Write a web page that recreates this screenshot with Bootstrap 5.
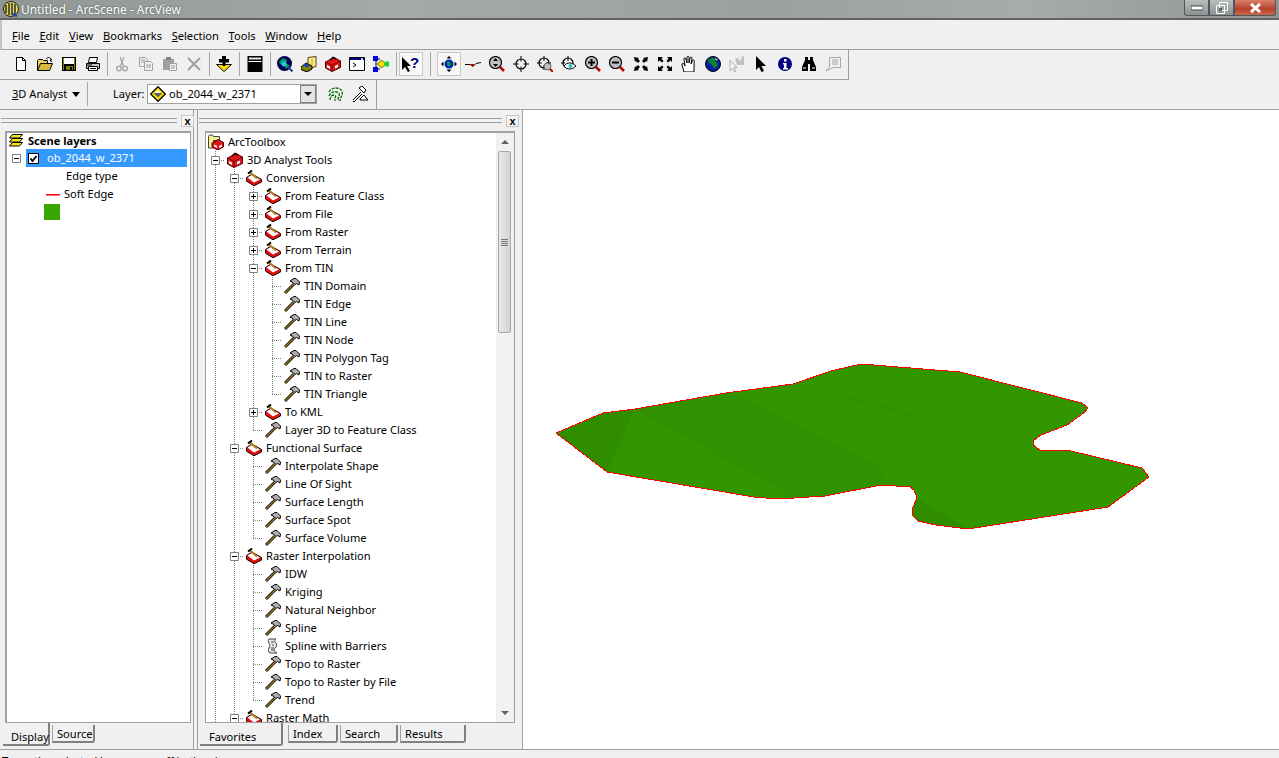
<!DOCTYPE html>
<html lang="en">
<head>
  <meta charset="UTF-8" />
  <meta name="viewport" content="width=device-width, initial-scale=1.0" />
  <title>Untitled - ArcScene - ArcView</title>
  <link href="https://cdn.jsdelivr.net/npm/bootstrap@5.3.3/dist/css/bootstrap.min.css" rel="stylesheet">
  <style>
    html, body { height: 100%; }
    body { width: 1279px; height: 758px; overflow: hidden; background: #f0f0f0; color: #000; font: 11.1px/18px "Noto Sans", "Liberation Sans", sans-serif; }
    .ico { width: 16px; height: 16px; flex: none; display: block; }
    .titlebar { height: 20px; background: linear-gradient(90deg, #8f9694, #a4aaa8 30%, #9ba1a0 60%, #a6acaa 80%, #8f9694); border-bottom: 2px solid #5f6362; padding-left: 3px; color: #fff; font-size: 11.9px; text-shadow: 0 0 2px #555; }
    .titlebar span { margin-left: 2px; }
    .winbtns { margin-right: 3px; align-self: flex-start; }
    .winbtn { width: 25px; height: 16px; border: 1px solid #50565a; border-top: 0; background: linear-gradient(#b9bdbd, #8d9292); display: flex; align-items: center; justify-content: center; }
    .winbtn-first { border-radius: 0 0 0 3px; }
    .winbtn-close { width: 42px; background: linear-gradient(#d8806c, #b8402c 60%, #c96a50); border-radius: 0 0 3px 0; }
    .menubar { height: 30px; border-bottom: 1px solid #a0a0a0; padding: 2px 0 0 10px; gap: 9.7px; border-left: 2px solid #c4c4c4; }
    .menubar .nav-link { padding: 0; color: #000; font-size: 11.1px; }
    .tb-band { height: 30px; }
    .tb-last { border-bottom: 1px solid #a0a0a0; }
    .tb-bar { height: 30px; border-right: 1px solid #a0a0a0; border-bottom: 1px solid #a0a0a0; }
    .tb-std { width: 849px; padding-left: 9px; padding-bottom: 2px; }
    .tb-3d { width: 377px; border-bottom: 0; padding-left: 12px; padding-bottom: 2px; }
    .tbtn { width: 24px; height: 24px; padding: 0; border: 0; border-radius: 0; display: flex; align-items: center; justify-content: center; flex: none; }
    .tbtn-on { background: #f8f8f8; box-shadow: inset 0 0 0 1px #c8c8c8; }
    .tsep { flex: none; display: flex; justify-content: center; }
    .tsep::before { content: ""; width: 1px; height: 24px; background: #a8a8a8; }
    .s5 { width: 5px; } .s6 { width: 6px; } .s7 { width: 7px; } .s14 { width: 14px; }
    .an-btn { width: 73px; white-space: nowrap; }
    .an-arrow { width: 0; height: 0; border: 4px solid transparent; border-top: 5px solid #000; border-bottom: 0; margin-left: 5px; }
    .layer-lbl { margin-left: 23px; width: 34px; }
    .combo { width: 170px; height: 20px; background: #fff; border: 1px solid #a0a0a0; padding-left: 2px; }
    .combo span { flex: 1; margin-left: 3px; }
    .combo-btn { width: 16px; height: 18px; background: #e4e4e4; border: 1px solid #808080; display: flex; align-items: center; justify-content: center; }
    .combo-btn::before { content: ""; border: 4px solid transparent; border-top: 4px solid #000; border-bottom: 0; }
    .tb-tools { margin-left: 7px; }
    .mainrow { height: 639px; }
    .dock { display: flex; flex-direction: column; }
    .dock-l { width: 194px; padding-left: 5px; border-right: 1px solid #a0a0a0; }
    .dock-r { width: 326px; margin-left: 3px; border-left: 1px solid #a0a0a0; border-right: 1px solid #a0a0a0; padding-left: 7px; padding-right: 3px; }
    .dock-head { height: 21px; gap: 4px; flex: none; }
    .grip { flex: 1; height: 5px; border-top: 1px solid #a0a0a0; border-bottom: 1px solid #a0a0a0; border-left: 0; }
    .closer { width: 13px; height: 12px; background: #f4f4f4; border: 1px solid #c8c8c8; font: bold 11px/10px "Liberation Sans", sans-serif; text-align: center; flex: none; }
    .dock-l .grip { margin-left: -4px; }
    .dock-l .closer { margin-right: -1px; }
    .dock-r .grip { margin-left: -6px; }
    .sunken { height: 592px; background: #fff; border: 1px solid #a0a0a0; border-top-width: 2px; border-left-width: 2px; overflow: hidden; flex: none; }
    .dock-l .sunken { width: 186px; padding: 0 3px 0 0; }
    .dock-r .sunken { width: 310px; border-left-width: 1px; }
    .sc-head { height: 16px; padding-left: 1px; font-weight: 700; }
    .sc-head span { margin-left: 4px; }
    .sc-row { height: 18px; }
    .exp-slot { width: 19px; flex: none; display: flex; align-items: center; justify-content: center; }
    .sc-sel { flex: 1; height: 18px; background: #3399ff; color: #fff; padding-left: 2px; }
    .sc-check { width: 11px; height: 11px; margin-right: 8px; }
    .indent-a { padding-left: 59px; } .indent-b { padding-left: 39px; }
    .soft-line { width: 14px; height: 3px; margin-right: 4px; margin-top: 3px; flex: none; display: block; }
    .swatch { width: 16px; height: 16px; background: #38a600; margin: 1px 0 0 37px; }
    .tree-wrap { flex: 1; min-width: 0; overflow: hidden; }
    .t-row { height: 18px; white-space: nowrap; }
    .t-label { margin-left: 4px; }
    .t-ic { margin-left: 2px; }
    .cell { width: 19px; height: 18px; flex: none; display: flex; align-items: center; justify-content: center; background-repeat: no-repeat; }
    .c-v { background-image: repeating-linear-gradient(#808080 0 1px, transparent 1px 2px); background-size: 1px 100%; background-position: 9px 0; }
    .c-tee { background-image: repeating-linear-gradient(#808080 0 1px, transparent 1px 2px), repeating-linear-gradient(90deg, #808080 0 1px, transparent 1px 2px); background-size: 1px 100%, 10px 1px; background-position: 9px 0, 9px 9px; }
    .c-ell { background-image: repeating-linear-gradient(#808080 0 1px, transparent 1px 2px), repeating-linear-gradient(90deg, #808080 0 1px, transparent 1px 2px); background-size: 1px 10px, 10px 1px; background-position: 9px 0, 9px 9px; }
    .exp { width: 9px; height: 9px; display: block; }
    .vscroll { width: 18px; flex: none; background: #f2f2f2; border-left: 1px solid #eee; border-right: 2px solid #f0f0f0; }
    .sb-end { height: 18px; display: flex; align-items: center; justify-content: center; flex: none; }
    .sb-up::before { content: ""; border: 4px solid transparent; border-bottom: 4px solid #606060; border-top: 0; }
    .sb-dn::before { content: ""; border: 4px solid transparent; border-top: 4px solid #606060; border-bottom: 0; }
    .sb-thumb { height: 182px; margin: 0 1px; background: linear-gradient(90deg, #e8e8e8, #d4d4d4); border: 1px solid #a8a8a8; border-radius: 2px; display: flex; align-items: center; justify-content: center; flex: none; }
    .sb-thumb::before { content: ""; width: 7px; height: 7px; background: repeating-linear-gradient(#777 0 1px, transparent 1px 2px); }
    .sb-rest { flex: 1; }
    .tabstrip { height: 25px; flex: none; flex-wrap: nowrap; }
    .tabstrip .nav-link { padding: 0 0 0 4px; height: 18px; color: #000; background: #f0f0f0; border: 1px solid #a0a0a0; border-top: 0; border-right: 2px solid #808080; border-bottom: 2px solid #808080; border-radius: 0 0 3px 0; font: 11.1px/17px "Noto Sans", "Liberation Sans", sans-serif; margin: 2px 0 0 2px; white-space: nowrap; flex: none; }
    .tabstrip .tab-on { height: 23px; margin: 0 0 0 -2px; padding: 5px 0 0 8px; border-left: 0; }
    .dock-r .tabstrip .tab-on { margin-left: -5px; padding-left: 9px; margin-right: 3px; }
    .w-display { width: 47px; } .w-source { width: 43px; }
    .w-fav { width: 83px; } .w-index { width: 50px; } .w-search { width: 58px; } .w-results { width: 66px; }
    .scene-view { flex: 1; background: #fff; }
    .scene-svg { display: block; width: 756px; height: 639px; }
    .statusbar { height: 9px; border-top: 1px solid #a0a0a0; overflow: hidden; padding: 2px 0 0 2px; line-height: 18px; white-space: nowrap; }
  </style>
</head>
<body>
<svg width="0" height="0" class="d-none" aria-hidden="true"><defs>
  <symbol id="i-app" viewBox="0 0 16 16"><circle cx="8" cy="8" r="7.500" fill="#e8d850" stroke="#222"/><path d="M3 4v8M6 2v12M9 2v12M12 3v10" stroke="#223" stroke-width="1.400"/><path d="M9 13l5 2" stroke="#2040c0" stroke-width="2"/></symbol>
  <symbol id="i-new" viewBox="0 0 16 16"><path d="M3.500 1.500h6l3 3v10h-9z" fill="#fff" stroke="#000"/><path d="M9.500 1.500v3h3" fill="none" stroke="#000"/></symbol>
  <symbol id="i-open" viewBox="0 0 16 16"><path d="M.5 14.500v-10l1-1h4l1 1h4v3" fill="#e8d060" stroke="#000"/><path d="M.5 14.500l3-7h12l-3 7z" fill="#d8b840" stroke="#000"/><path d="M9 3c2-2 4-2 5 0l1 1h-2l1.500 2" fill="none" stroke="#000"/></symbol>
  <symbol id="i-save" viewBox="0 0 16 16"><path d="M1 1h14v14H1z" fill="#000"/><path d="M3 2h10v6H3z" fill="#fff"/><path d="M2 2h1v12H2zM13 2h1v12h-1zM5 10h7v4H5z" fill="#808000"/><path d="M9 11h2v3H9z" fill="#000"/></symbol>
  <symbol id="i-print" viewBox="0 0 16 16"><path d="M4.500 1.500h8l-1 5h-8z" fill="#fff" stroke="#000"/><path d="M1.500 7.500h13v5h-13z" fill="#c8c8c8" stroke="#000"/><path d="M3.500 10.500h9v4h-9z" fill="#fff" stroke="#000"/><path d="M2 9h5" stroke="#000"/><path d="M5 12.500h6" stroke="#000"/></symbol>
  <symbol id="i-cut" viewBox="0 0 16 16"><g fill="none" stroke="#a0a0a0" stroke-width="1.200"><path d="M6 1l3.500 9M10 1L6.500 10"/><circle cx="5" cy="12.500" r="2.300"/><circle cx="11" cy="12.500" r="2.300"/></g></symbol>
  <symbol id="i-copy" viewBox="0 0 16 16"><g fill="#f0f0f0" stroke="#a0a0a0"><path d="M1.500 1.500h6l2 2v7h-8z"/><path d="M6.500 5.500h6l2 2v7h-8z"/></g><path d="M3 4h4M3 6h3M8 9h5M8 11h5" stroke="#a0a0a0"/></symbol>
  <symbol id="i-paste" viewBox="0 0 16 16"><path d="M1 3h11v11H1z" fill="#a0a0a0"/><path d="M4 1h5v3H4z" fill="#808080"/><path d="M7.500 7.500h7v7h-7z" fill="#f0f0f0" stroke="#a0a0a0"/><path d="M9 10h4M9 12h4" stroke="#a0a0a0"/></symbol>
  <symbol id="i-del" viewBox="0 0 16 16"><path d="M2 2l12 12M14 2L2 14" stroke="#a0a0a0" stroke-width="2"/></symbol>
  <symbol id="i-add" viewBox="0 0 16 16"><path d="M.5 8.500h15L8 15.500z" fill="#ffe000" stroke="#000"/><path d="M6 0h4v3h3v3.500H3V3h3z" fill="#000"/><path d="M6.500 6h3v4h-3z" fill="#000"/></symbol>
  <symbol id="i-win" viewBox="0 0 16 16"><path d="M.5 0h15v16H.5z" fill="#000"/><path d="M2 1.500h12v2H2z" fill="#e8e8e8"/><path d="M1.500 5.500h13" stroke="#fff"/></symbol>
  <symbol id="i-gsearch" viewBox="0 0 16 16"><circle cx="7.500" cy="7.500" r="7.500" fill="#000050"/><path d="M2 6l4-4 4 2-1 3 4 3-4 3-2-4-4-1z" fill="#00a060"/><circle cx="7" cy="8" r="2.500" fill="#30c0e0"/><path d="M11 11l4.500 4.500" stroke="#2040a0" stroke-width="2"/></symbol>
  <symbol id="i-cat" viewBox="0 0 16 16"><path d="M7 1.500l8-1v10l-8 2z" fill="#f8f0a0" stroke="#504000"/><path d="M9.500 3l3-.5v7l-3 .5z" fill="#e8d040"/><path d="M0 11l5-4 6 3v3l-5 3-6-2.500z" fill="#808000" stroke="#000"/><path d="M2 9.500l3-2 4 2-3 2z" fill="#2040c0"/></symbol>
  <symbol id="i-red" viewBox="0 0 16 16"><path d="M.5 6L9 1.500 15.500 5v6.500L7 15.500l-6.500-3.500z" fill="#e01818" stroke="#500"/><path d="M.5 6L7 9.500 15.500 5M7 9.500v6" fill="none" stroke="#700"/><path d="M5 4l3-2.500 3 1.500" fill="none" stroke="#200" stroke-width="1.500"/><path d="M2 9l3 1.500v2.500l-3-1.500zM10 10l3-1.500v2.500l-3 1.500z" fill="#fff"/></symbol>
  <symbol id="i-cmd" viewBox="0 0 16 16"><path d="M.5 1.500h15v13H.5z" fill="#fff" stroke="#000"/><path d="M1 2h14v2H1z" fill="#000080"/><path d="M12 2h2v2h-2z" fill="#d0d0d0"/><path d="M4 7l3 2-3 2" fill="none" stroke="#000"/></symbol>
  <symbol id="i-model" viewBox="0 0 16 16"><path d="M3 3v10M3 3h4M3 13h4M7 8h7" stroke="#000" fill="none"/><path d="M0 0h5v5H0zM0 11h5v5H0z" fill="#0000e0"/><path d="M8.500 4l4 4-4 4-4-4z" fill="#ffe000" stroke="#606000"/><path d="M12 5.500h4v5h-4z" fill="#00e040"/></symbol>
  <symbol id="i-help" viewBox="0 0 20 16"><path d="M1 1v13l3-3 3 5 2-1-3-5h4z" fill="#000"/><text x="9" y="12" font-family="Liberation Sans, sans-serif" font-size="15" font-weight="700" fill="#000080">?</text></symbol>
  <symbol id="i-nav" viewBox="0 0 16 16"><circle cx="8" cy="8" r="4.500" fill="#0020c0"/><path d="M6 5l3 1 1 3-3 2-1-3z" fill="#00a040"/><path d="M8 0l2.500 2.500h-5zM8 16l-2.500-2.500h5zM0 8l2.500-2.500v5zM16 8l-2.500 2.500v-5z" fill="#000"/></symbol>
  <symbol id="i-fly" viewBox="0 0 16 16"><path d="M0 8.500h5l3 2 3-3 5-1" fill="none" stroke="#000"/><path d="M6 8h3v2H6z" fill="#c00000"/></symbol>
  <symbol id="i-zud" viewBox="0 0 16 16"><circle cx="6.500" cy="6.500" r="6" fill="#c0c0c0" stroke="#000" stroke-width="1.200"/><path d="M6.500 2l2.500 3H4zM6.500 11L4 8h5z" fill="#000"/><path d="M11 11l4 4" stroke="#c00000" stroke-width="2.500"/></symbol>
  <symbol id="i-tgt" viewBox="0 0 16 16"><circle cx="8" cy="8" r="5" fill="none" stroke="#000" stroke-width="1.200"/><path d="M8 0v5.500M8 10.500V16M0 8h5.500M10.500 8H16" stroke="#000"/></symbol>
  <symbol id="i-tgtz" viewBox="0 0 16 16"><circle cx="7" cy="7" r="5" fill="none" stroke="#000" stroke-width="1.200"/><path d="M7 0v5M0 7h5M9 7h5M7 9v5" stroke="#000"/><circle cx="10.500" cy="10.500" r="3.500" fill="#c0c0c0" stroke="#606060"/><path d="M13 13l3 3" stroke="#c00000" stroke-width="2"/></symbol>
  <symbol id="i-tgte" viewBox="0 0 16 16"><circle cx="7" cy="7" r="5" fill="none" stroke="#000" stroke-width="1.200"/><path d="M7 0v5M0 7h4" stroke="#000"/><path d="M3 10c3-4 8-4 12 0-4 4-9 4-12 0z" fill="#fff" stroke="#000"/><circle cx="9.500" cy="10" r="2" fill="#20c0c0"/></symbol>
  <symbol id="i-zin" viewBox="0 0 16 16"><circle cx="6.500" cy="6.500" r="6" fill="#c0c0c0" stroke="#000" stroke-width="1.200"/><path d="M5.500 3h2v2.500H10v2H7.500V10h-2V7.500H3v-2h2.500z" fill="#000"/><path d="M11 11l4 4" stroke="#c00000" stroke-width="2.500"/></symbol>
  <symbol id="i-zout" viewBox="0 0 16 16"><circle cx="6.500" cy="6.500" r="6" fill="#c0c0c0" stroke="#000" stroke-width="1.200"/><path d="M3 5.500h7v2H3z" fill="#000"/><path d="M11 11l4 4" stroke="#c00000" stroke-width="2.500"/></symbol>
  <symbol id="i-fixin" viewBox="0 0 16 16"><path d="M1 1l5 1-1 1 2 2-2 2-2-2-1 1zM15 1l-1 5-1-1-2 2-2-2 2-2-1-1zM1 15l1-5 1 1 2-2 2 2-2 2 1 1zM15 15l-5-1 1-1-2-2 2-2 2 2 1-1z" fill="#000"/></symbol>
  <symbol id="i-fixout" viewBox="0 0 16 16"><path d="M1 1h5l-1.500 1.500L6.500 5 5 6.500 2.500 4.500 1 6zM15 1v5l-1.500-1.500L11 6.500 9.500 5l2-2.500L10 1zM1 15v-5l1.500 1.500L5 9.500 6.500 11l-2 2.500L6 15zM15 15h-5l1.500-1.500L9.500 11 11 9.500l2.500 2L15 10z" fill="#000"/></symbol>
  <symbol id="i-hand" viewBox="0 0 16 16"><path d="M3 16L1 9c-.5-2 1.500-2 2-1l1 2-1-7c0-1.500 2-1.500 2 0l1 4V1.500c0-1.500 2-1.500 2 0V7l1-5c.3-1.500 2-1 2 0l-1 6 1.500-3.500c.5-1 2-.5 1.700.7L13 12v4z" fill="#fff" stroke="#000"/></symbol>
  <symbol id="i-globe" viewBox="0 0 16 16"><circle cx="8" cy="8" r="7.500" fill="#0020a0" stroke="#000"/><path d="M3 4l4-2.500 4 1-1 3 3 2-1 3-3 2-2-4-4-2z" fill="#108030"/><path d="M10 2l3 1.500-2 1.500z" fill="#c0c0c0"/></symbol>
  <symbol id="i-selg" viewBox="0 0 16 16"><path d="M1 4v11l2.500-2.500L5.500 16l1.500-1-2-3.500h3z" fill="#f0f0f0" stroke="#b0b0b0"/><path d="M6 3l9-3v9H8z" fill="#c0c0c0"/><path d="M9 2l4-1-2 4z" fill="#f8f8f8"/></symbol>
  <symbol id="i-arr" viewBox="0 0 16 16"><path d="M3 0v14l3-3 2.500 5 2.500-1-2.500-5H13z" fill="#000"/></symbol>
  <symbol id="i-info" viewBox="0 0 16 16"><circle cx="8" cy="8" r="7" fill="#000080"/><path d="M7 3h2.500v2.500H7zM6 7h3.500v5H11v1.500H6V12h1V8.500H6z" fill="#fff"/></symbol>
  <symbol id="i-bino" viewBox="0 0 16 16"><path d="M4 1h3v3h2V1h3v3l3 7v4H9V8H7v7H1v-4l3-7z" fill="#000"/><path d="M2 12h3M11 12h3" stroke="#fff"/></symbol>
  <symbol id="i-tip" viewBox="0 0 16 16"><path d="M4.500 1.500h11v10H8L1 15l3.500-4z" fill="#f0f0f0" stroke="#a8a8a8"/><path d="M7 4h6M7 6h6M7 8h6" stroke="#a8a8a8"/></symbol>
  <symbol id="i-layer" viewBox="0 0 16 16"><path d="M8 .7L15.300 8 8 15.300.7 8z" fill="#ffe000" stroke="#000" stroke-width="1.300"/><path d="M3.500 7h9L8 11.500z" fill="#606060"/><path d="M5 7l3-3 3 3z" fill="#fff"/></symbol>
  <symbol id="i-contour" viewBox="0 0 16 16"><g fill="none" stroke="#007000" stroke-width="1.300" stroke-dasharray="3 1"><path d="M1 6c2-4 7-5 11-3 3 2 3 6 1 8l-1 4"/><path d="M1 10c1-3 4-5 8-4 3 1 3 4 1 6l1 3"/><path d="M2 14c0-3 2-5 4-5 2 0 2 2 1 3l0 3"/></g></symbol>
  <symbol id="i-interp" viewBox="0 0 16 16"><path d="M1 14L9 6M1 15l1 1 8-8" stroke="#000" fill="none"/><path d="M7 2l3-2 4 4-2 3z" fill="#fff" stroke="#000"/><path d="M8 13l4-4 4 5H8z" fill="#fff" stroke="#000"/></symbol>
  <symbol id="i-stack" viewBox="0 0 16 16"><g fill="#f8e020" stroke="#000"><path d="M4.500 1.500h10l-3 3.500H1.500z"/><path d="M4.500 5.500h10l-3 3.500H1.500z"/><path d="M4.500 9.500h10l-3 3.500H1.500z"/></g></symbol>
  <symbol id="i-root" viewBox="0 0 16 16"><path d="M.5 14V2.500l1-1.500h3l1 1.500h6v4h-6V14z" fill="#f8f090" stroke="#404040"/><path d="M4 9l6-3.500 5.500 3v4.500L9.500 16 4 13z" fill="#e01818" stroke="#500"/><path d="M6 10.500l3 1.500v2l-3-1.500zM11 12l3-1.500v2l-3 1.500z" fill="#fff"/></symbol>
  <symbol id="i-set" viewBox="0 0 16 16"><path d="M.5 7.500L6 4l9.500 5.500V12L8 15.800.5 11.200z" fill="#e01010" stroke="#200"/><path d="M1.500 7.500L6 5l8 4.500L8 12.500z" fill="#fff"/><path d="M4 2.500l7 6" stroke="#b08020" stroke-width="2"/><path d="M6 .5L2 3.500" stroke="#000" stroke-width="2"/></symbol>
  <symbol id="i-ham" viewBox="0 0 16 16"><path d="M1 15l9-9" stroke="#000" stroke-width="2.800"/><path d="M1 15l9-9" stroke="#a07820" stroke-width="1.200"/><path d="M6 3l4-2.500h2L15.500 4 15 7l-2.500-1.500-1.500 1-2-2z" fill="#b0b0b0" stroke="#000"/></symbol>
  <symbol id="i-scroll" viewBox="0 0 16 16"><path d="M4 1h7c-2 1-1 3 0 4s1 4-1 5 0 4 2 5H5c-2-1-2-3-1-5s1-3 0-5-1-3 0-4z" fill="#e8e8e8" stroke="#404040"/><path d="M6 4h3M7 7h2M6 10h3M6 12h3" stroke="#404040"/></symbol>
  <symbol id="i-minus" viewBox="0 0 9 9"><path d="M.5.5h8v8h-8z" fill="#fff" stroke="#808080"/><path d="M2 4.500h5" stroke="#000"/></symbol>
  <symbol id="i-plus" viewBox="0 0 9 9"><path d="M.5.5h8v8h-8z" fill="#fff" stroke="#808080"/><path d="M2 4.500h5M4.500 2v5" stroke="#000"/></symbol>
</defs></svg>

<div class="titlebar d-flex align-items-center">
  <svg class="ico"><use href="#i-app"/></svg>
  <span class="flex-grow-1">Untitled - ArcScene - ArcView</span>
  <div class="winbtns d-flex">
    <div class="winbtn winbtn-first"><svg width="12" height="6"><path d="M0 1h12v4H0z" fill="#fff" stroke="#444"/></svg></div>
    <div class="winbtn"><svg width="12" height="12"><path d="M3.500 .5h8v8h-8z" fill="none" stroke="#fff"/><path d="M.5 3.500h8v8h-8z" fill="none" stroke="#fff" stroke-width="1"/><path d="M3.500 6.500h2v2h-2z" fill="none" stroke="#444"/></svg></div>
    <div class="winbtn winbtn-close"><svg width="13" height="10"><path d="M2 1l9 8M11 1L2 9" stroke="#fff" stroke-width="3"/></svg></div>
  </div>
</div>

<nav class="nav menubar align-items-center">
  <a class="nav-link" href="#"><u>F</u>ile</a>
  <a class="nav-link" href="#"><u>E</u>dit</a>
  <a class="nav-link" href="#"><u>V</u>iew</a>
  <a class="nav-link" href="#"><u>B</u>ookmarks</a>
  <a class="nav-link" href="#"><u>S</u>election</a>
  <a class="nav-link" href="#"><u>T</u>ools</a>
  <a class="nav-link" href="#"><u>W</u>indow</a>
  <a class="nav-link" href="#"><u>H</u>elp</a>
</nav>

<div class="tb-band d-flex"><div class="tb-bar tb-std d-flex align-items-center" id="stdbar"></div></div>

<div class="tb-band tb-last d-flex">
  <div class="tb-bar tb-3d d-flex align-items-center">
    <div class="an-btn d-flex align-items-center"><span><u>3</u>D Analyst</span><i class="an-arrow"></i></div>
    <span class="tsep s5"></span>
    <span class="layer-lbl">Layer:</span>
    <div class="combo d-flex align-items-center">
      <svg class="ico"><use href="#i-layer"/></svg>
      <span>ob_2044_w_2371</span>
      <i class="combo-btn"></i>
    </div>
    <div class="d-flex tb-tools">
      <button class="btn tbtn"><svg class="ico"><use href="#i-contour"/></svg></button>
      <button class="btn tbtn"><svg class="ico"><use href="#i-interp"/></svg></button>
    </div>
  </div>
</div>

<div class="mainrow d-flex">
  <div class="dock dock-l">
    <div class="dock-head d-flex align-items-center"><div class="grip"></div><div class="closer">x</div></div>
    <div class="sunken">
      <div class="sc-head d-flex align-items-center"><svg class="ico"><use href="#i-stack"/></svg><span>Scene layers</span></div>
      <div class="sc-row d-flex">
        <div class="exp-slot"><svg class="exp"><use href="#i-minus"/></svg></div>
        <div class="sc-sel d-flex align-items-center">
          <svg class="sc-check" viewBox="0 0 11 11"><path d="M.5.5h10v10H.5z" fill="#fff" stroke="#000"/><path d="M2.500 5.500l2 2.500 4-5" fill="none" stroke="#000" stroke-width="1.800"/></svg>
          <span>ob_2044_w_2371</span>
        </div>
      </div>
      <div class="sc-row indent-a">Edge type</div>
      <div class="sc-row indent-b d-flex align-items-center"><svg class="soft-line" viewBox="0 0 14 3"><path d="M0 0h14v1.500H0z" fill="#ff0000"/></svg><span>Soft Edge</span></div>
      <div class="swatch"></div>
    </div>
    <nav class="nav tabstrip">
      <a class="nav-link tab-on w-display" href="#">Display</a>
      <a class="nav-link w-source" href="#">Source</a>
    </nav>
  </div>

  <div class="dock dock-r">
    <div class="dock-head d-flex align-items-center"><div class="grip"></div><div class="closer">x</div></div>
    <div class="sunken d-flex">
      <div class="tree-wrap" id="tree"></div>
      <div class="vscroll d-flex flex-column">
        <div class="sb-end sb-up"></div>
        <div class="sb-thumb"></div>
        <div class="sb-rest"></div>
        <div class="sb-end sb-dn"></div>
      </div>
    </div>
    <nav class="nav tabstrip">
      <a class="nav-link tab-on w-fav" href="#">Favorites</a>
      <a class="nav-link w-index" href="#">Index</a>
      <a class="nav-link w-search" href="#">Search</a>
      <a class="nav-link w-results" href="#">Results</a>
    </nav>
  </div>

  <div class="scene-view">
    <svg class="scene-svg" viewBox="523 110 756 639">
      <g shape-rendering="crispEdges">
      <polygon points="556,433 603,413 635,409 726,393 793,384 831,371 861,364 960,372 1082,403 1088,408 1085,412 1067,425 1041,435 1034,440 1033,445 1040,450 1071,451 1142,468 1149,477 1108,507 968,529 936,525 918,521 912,515 913,507 917,498 914,490 910,487 881,485 825,496 778,499 754,497 607,472" fill="#339600"/>
      <polygon points="556,433 603,413 635,409 607,472" fill="#308d00"/>
      <polygon points="635,409 726,393 750,400 885,470 881,485 825,496 790,498 780,490" fill="#319100"/>
      <polygon points="793,384 960,430 905,410" fill="#319200"/>
      <polygon points="917,498 968,529 936,525 918,521 912,515 913,507" fill="#308d00"/>
      <polygon points="960,372 1082,403 1088,408 1000,385" fill="#339300"/>
      <polygon points="556,433 603,413 635,409 726,393 793,384 831,371 861,364 960,372 1082,403 1088,408 1085,412 1067,425 1041,435 1034,440 1033,445 1040,450 1071,451 1142,468 1149,477 1108,507 968,529 936,525 918,521 912,515 913,507 917,498 914,490 910,487 881,485 825,496 778,499 754,497 607,472" fill="none" stroke="#ff0000" stroke-width="1"/>
      </g>
    </svg>
  </div>
</div>

<div class="statusbar">Turns the selected layer on or off in the view</div>

<script>
  // std toolbar: icon id, or s5/s6/s7/s14 for a separator
  const std = ['new','open','save','print','s5','cut','copy','paste','del','s6','add','s7','win','s6',
    'gsearch','cat','red','cmd','model','s6','help','s14','nav','fly','zud','tgt','tgtz','tgte','zin','zout',
    'fixin','fixout','hand','globe','selg','arr','info','bino','tip'];
  document.getElementById('stdbar').innerHTML = std.map(function (k) {
    if (k[0] === 's' && !isNaN(k[1])) return '<span class="tsep ' + k + '"></span>';
    const on = (k === 'help' || k === 'nav') ? ' tbtn-on' : '';
    const w = k === 'help' ? 20 : 16;
    return '<button class="btn tbtn' + on + '"><svg width="' + w + '" height="16"><use href="#i-' + k + '"/></svg></button>';
  }).join('');

  // [label, icon, children, more]; more = the branch carries on below the visible part
  const h = function (t) { return [t, 'ham']; };
  const tree = ['ArcToolbox', 'root', [
    ['3D Analyst Tools', 'red', [
      ['Conversion', 'set', [
        ['From Feature Class', 'set', []],
        ['From File', 'set', []],
        ['From Raster', 'set', []],
        ['From Terrain', 'set', []],
        ['From TIN', 'set', ['TIN Domain','TIN Edge','TIN Line','TIN Node','TIN Polygon Tag','TIN to Raster','TIN Triangle'].map(h)],
        ['To KML', 'set', []],
        h('Layer 3D to Feature Class')
      ]],
      ['Functional Surface', 'set', ['Interpolate Shape','Line Of Sight','Surface Length','Surface Spot','Surface Volume'].map(h)],
      ['Raster Interpolation', 'set', [
        h('IDW'), h('Kriging'), h('Natural Neighbor'), h('Spline'), ['Spline with Barriers', 'scroll'],
        h('Topo to Raster'), h('Topo to Raster by File'), h('Trend')
      ]],
      ['Raster Math', 'set', [], true]
    ], true]
  ]];

  // collapsed toolsets that still show a plus box
  const closed = ['From Feature Class','From File','From Raster','From Terrain','To KML'];
  let html = '';
  function row(node, trail, last) {
    const kids = node[2];
    let cells = '';
    trail.forEach(function (open) { cells += '<span class="cell' + (open ? ' c-v' : '') + '"></span>'; });
    if (last !== null) {
      let box = '';
      if (closed.indexOf(node[0]) >= 0) box = '<svg class="exp"><use href="#i-plus"/></svg>';
      else if (kids && (kids.length || node[3])) box = '<svg class="exp"><use href="#i-minus"/></svg>';
      cells += '<span class="cell ' + (last ? 'c-ell' : 'c-tee') + '">' + box + '</span>';
    }
    html += '<div class="t-row d-flex align-items-center">' + cells +
      '<svg class="ico t-ic"><use href="#i-' + node[1] + '"/></svg><span class="t-label">' + node[0] + '</span></div>';
    (kids || []).forEach(function (k, i) {
      const isLast = i === kids.length - 1 && !k[3];
      row(k, last === null ? [] : trail.concat(!last), isLast);
    });
  }
  row(tree, [], null);
  document.getElementById('tree').innerHTML = html;
</script>
<script src="https://cdn.jsdelivr.net/npm/bootstrap@5.3.3/dist/js/bootstrap.bundle.min.js"></script>
</body>
</html>
